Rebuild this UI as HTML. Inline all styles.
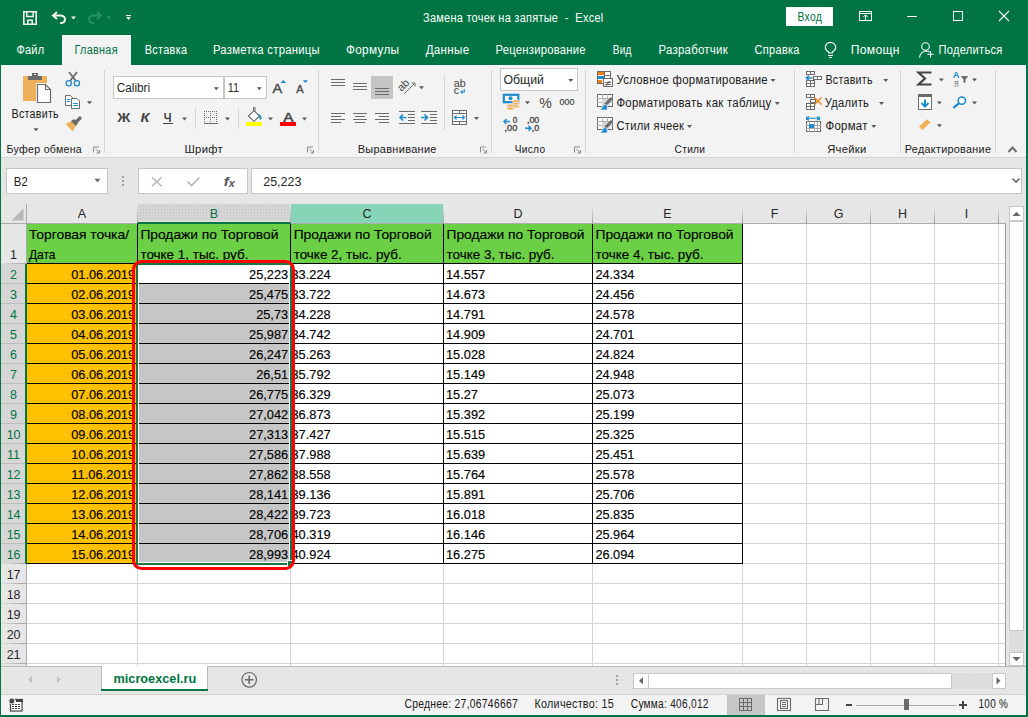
<!DOCTYPE html><html><head><meta charset="utf-8"><style>
html,body{margin:0;padding:0;width:1028px;height:717px;overflow:hidden;background:#e6e6e6}
svg{position:absolute;left:0;top:0;display:block}
text{font-family:"Liberation Sans",sans-serif;white-space:pre}
</style></head><body><svg width="1028" height="717" viewBox="0 0 1028 717" shape-rendering="crispEdges">
<rect x="0" y="0" width="1028" height="717" fill="#e6e6e6" />
<rect x="0" y="0" width="1028" height="65" fill="#007442" />
<rect x="0" y="65" width="1028" height="92" fill="#f3f3f3" />
<rect x="0" y="157" width="1028" height="1" fill="#d5d5d5" />
<rect x="62" y="35" width="69" height="30" fill="#f3f3f3" />
<text x="423.0" y="21.7" font-size="12" fill="#ffffff" letter-spacing="0.3" font-weight="normal" font-family="Liberation Sans" textLength="180.5" lengthAdjust="spacingAndGlyphs">Замена точек на запятые  -  Excel</text>
<rect x="786" y="7" width="47" height="19" fill="#ffffff" />
<text x="797.5" y="21.0" font-size="12" fill="#007442" letter-spacing="0.3" font-weight="normal" font-family="Liberation Sans" textLength="24.5" lengthAdjust="spacingAndGlyphs">Вход</text>
<text x="16.4" y="54.0" font-size="12" fill="#ffffff" letter-spacing="0.3" font-weight="normal" font-family="Liberation Sans" textLength="28.0" lengthAdjust="spacingAndGlyphs">Файл</text>
<text x="74.5" y="54.0" font-size="12" fill="#007442" letter-spacing="0.3" font-weight="normal" font-family="Liberation Sans" textLength="43.3" lengthAdjust="spacingAndGlyphs">Главная</text>
<text x="144.8" y="54.0" font-size="12" fill="#ffffff" letter-spacing="0.3" font-weight="normal" font-family="Liberation Sans" textLength="42.5" lengthAdjust="spacingAndGlyphs">Вставка</text>
<text x="212.9" y="54.0" font-size="12" fill="#ffffff" letter-spacing="0.3" font-weight="normal" font-family="Liberation Sans" textLength="107.1" lengthAdjust="spacingAndGlyphs">Разметка страницы</text>
<text x="346.0" y="54.0" font-size="12" fill="#ffffff" letter-spacing="0.3" font-weight="normal" font-family="Liberation Sans" textLength="53.4" lengthAdjust="spacingAndGlyphs">Формулы</text>
<text x="425.7" y="54.0" font-size="12" fill="#ffffff" letter-spacing="0.3" font-weight="normal" font-family="Liberation Sans" textLength="43.7" lengthAdjust="spacingAndGlyphs">Данные</text>
<text x="495.5" y="54.0" font-size="12" fill="#ffffff" letter-spacing="0.3" font-weight="normal" font-family="Liberation Sans" textLength="90.3" lengthAdjust="spacingAndGlyphs">Рецензирование</text>
<text x="612.7" y="54.0" font-size="12" fill="#ffffff" letter-spacing="0.3" font-weight="normal" font-family="Liberation Sans" textLength="19.1" lengthAdjust="spacingAndGlyphs">Вид</text>
<text x="658.4" y="54.0" font-size="12" fill="#ffffff" letter-spacing="0.3" font-weight="normal" font-family="Liberation Sans" textLength="69.6" lengthAdjust="spacingAndGlyphs">Разработчик</text>
<text x="754.6" y="54.0" font-size="12" fill="#ffffff" letter-spacing="0.3" font-weight="normal" font-family="Liberation Sans" textLength="45.2" lengthAdjust="spacingAndGlyphs">Справка</text>
<text x="850.7" y="54.0" font-size="12" fill="#ffffff" letter-spacing="0.3" font-weight="normal" font-family="Liberation Sans" textLength="49.1" lengthAdjust="spacingAndGlyphs">Помощн</text>
<text x="938.4" y="54.0" font-size="12" fill="#ffffff" letter-spacing="0.3" font-weight="normal" font-family="Liberation Sans" textLength="64.2" lengthAdjust="spacingAndGlyphs">Поделиться</text>
<text x="6.6" y="153.0" font-size="11.6" fill="#202020" letter-spacing="0.3" font-weight="normal" font-family="Liberation Sans" textLength="75.4" lengthAdjust="spacingAndGlyphs">Буфер обмена</text>
<text x="184.5" y="153.0" font-size="11.6" fill="#202020" letter-spacing="0.3" font-weight="normal" font-family="Liberation Sans" textLength="38.5" lengthAdjust="spacingAndGlyphs">Шрифт</text>
<text x="357.7" y="153.0" font-size="11.6" fill="#202020" letter-spacing="0.3" font-weight="normal" font-family="Liberation Sans" textLength="79.0" lengthAdjust="spacingAndGlyphs">Выравнивание</text>
<text x="514.8" y="153.0" font-size="11.6" fill="#202020" letter-spacing="0.3" font-weight="normal" font-family="Liberation Sans" textLength="30.5" lengthAdjust="spacingAndGlyphs">Число</text>
<text x="674.6" y="153.0" font-size="11.6" fill="#202020" letter-spacing="0.3" font-weight="normal" font-family="Liberation Sans" textLength="30.7" lengthAdjust="spacingAndGlyphs">Стили</text>
<text x="827.2" y="153.0" font-size="11.6" fill="#202020" letter-spacing="0.3" font-weight="normal" font-family="Liberation Sans" textLength="39.4" lengthAdjust="spacingAndGlyphs">Ячейки</text>
<text x="904.8" y="153.0" font-size="11.6" fill="#202020" letter-spacing="0.3" font-weight="normal" font-family="Liberation Sans" textLength="86.4" lengthAdjust="spacingAndGlyphs">Редактирование</text>
<rect x="104" y="70" width="1" height="83" fill="#d5d5d5" />
<rect x="318" y="70" width="1" height="83" fill="#d5d5d5" />
<rect x="491" y="70" width="1" height="83" fill="#d5d5d5" />
<rect x="585" y="70" width="1" height="83" fill="#d5d5d5" />
<rect x="794" y="70" width="1" height="83" fill="#d5d5d5" />
<rect x="900" y="70" width="1" height="83" fill="#d5d5d5" />
<rect x="995" y="70" width="1" height="83" fill="#d5d5d5" />
<rect x="6" y="168" width="102" height="26" fill="#c6c6c6" />
<rect x="7" y="169" width="100" height="24" fill="#ffffff" />
<text x="13.8" y="186.0" font-size="12" fill="#202020" letter-spacing="0.3" font-weight="normal" font-family="Liberation Sans" textLength="14.4" lengthAdjust="spacingAndGlyphs">B2</text>
<rect x="138" y="168" width="110" height="26" fill="#c6c6c6" />
<rect x="139" y="169" width="108" height="24" fill="#ffffff" />
<rect x="251" y="168" width="771" height="26" fill="#c6c6c6" />
<rect x="252" y="169" width="769" height="24" fill="#ffffff" />
<text x="263.2" y="186.0" font-size="12.5" fill="#262626" font-weight="normal" font-family="Liberation Sans" textLength="38.3" lengthAdjust="spacingAndGlyphs">25,223</text>
<rect x="27" y="224" width="978" height="442" fill="#ffffff" />
<rect x="0" y="204" width="1005" height="20" fill="#e6e6e6" />
<rect x="0" y="224" width="26" height="442" fill="#e6e6e6" />
<rect x="137" y="224" width="1" height="442" fill="#d4d4d4" />
<rect x="290" y="224" width="1" height="442" fill="#d4d4d4" />
<rect x="443" y="224" width="1" height="442" fill="#d4d4d4" />
<rect x="592" y="224" width="1" height="442" fill="#d4d4d4" />
<rect x="742" y="224" width="1" height="442" fill="#d4d4d4" />
<rect x="806" y="224" width="1" height="442" fill="#d4d4d4" />
<rect x="870" y="224" width="1" height="442" fill="#d4d4d4" />
<rect x="934" y="224" width="1" height="442" fill="#d4d4d4" />
<rect x="998" y="224" width="1" height="442" fill="#d4d4d4" />
<rect x="27" y="263" width="978" height="1" fill="#d4d4d4" />
<rect x="27" y="283" width="978" height="1" fill="#d4d4d4" />
<rect x="27" y="303" width="978" height="1" fill="#d4d4d4" />
<rect x="27" y="323" width="978" height="1" fill="#d4d4d4" />
<rect x="27" y="343" width="978" height="1" fill="#d4d4d4" />
<rect x="27" y="363" width="978" height="1" fill="#d4d4d4" />
<rect x="27" y="383" width="978" height="1" fill="#d4d4d4" />
<rect x="27" y="403" width="978" height="1" fill="#d4d4d4" />
<rect x="27" y="423" width="978" height="1" fill="#d4d4d4" />
<rect x="27" y="443" width="978" height="1" fill="#d4d4d4" />
<rect x="27" y="463" width="978" height="1" fill="#d4d4d4" />
<rect x="27" y="483" width="978" height="1" fill="#d4d4d4" />
<rect x="27" y="503" width="978" height="1" fill="#d4d4d4" />
<rect x="27" y="523" width="978" height="1" fill="#d4d4d4" />
<rect x="27" y="543" width="978" height="1" fill="#d4d4d4" />
<rect x="27" y="563" width="978" height="1" fill="#d4d4d4" />
<rect x="27" y="583" width="978" height="1" fill="#d4d4d4" />
<rect x="27" y="603" width="978" height="1" fill="#d4d4d4" />
<rect x="27" y="623" width="978" height="1" fill="#d4d4d4" />
<rect x="27" y="643" width="978" height="1" fill="#d4d4d4" />
<rect x="27" y="663" width="978" height="1" fill="#d4d4d4" />
<rect x="1005" y="223" width="1" height="443" fill="#9b9b9b" />
<rect x="0" y="666" width="1006" height="1" fill="#9b9b9b" />
<rect x="0" y="223" width="1005" height="1" fill="#ababab" />
<rect x="26" y="204" width="1" height="462" fill="#ababab" />
<defs><pattern id="dots" width="3" height="3" patternUnits="userSpaceOnUse" x="1" y="1"><rect width="3" height="3" fill="#d5d5d5"/><rect x="1" y="1" width="1" height="1" fill="#c2c2c2"/></pattern></defs>
<rect x="138" y="204" width="152" height="17" fill="url(#dots)" />
<rect x="138" y="221" width="152" height="1" fill="#e6e0e0" />
<rect x="137" y="222" width="154" height="2" fill="#007442" />
<rect x="291" y="204" width="152" height="19" fill="#86d5b7" />
<defs><linearGradient id="hg" x1="0" y1="0" x2="0" y2="1"><stop offset="0" stop-color="#e6e6e6"/><stop offset="1" stop-color="#a0a0a0"/></linearGradient><linearGradient id="rg" x1="0" y1="0" x2="1" y2="0"><stop offset="0" stop-color="#e6e6e6"/><stop offset="1" stop-color="#a0a0a0"/></linearGradient></defs>
<rect x="137" y="205" width="1" height="18" fill="url(#hg)" />
<rect x="290" y="205" width="1" height="18" fill="url(#hg)" />
<rect x="443" y="205" width="1" height="18" fill="url(#hg)" />
<rect x="592" y="205" width="1" height="18" fill="url(#hg)" />
<rect x="742" y="205" width="1" height="18" fill="url(#hg)" />
<rect x="806" y="205" width="1" height="18" fill="url(#hg)" />
<rect x="870" y="205" width="1" height="18" fill="url(#hg)" />
<rect x="934" y="205" width="1" height="18" fill="url(#hg)" />
<rect x="998" y="205" width="1" height="18" fill="url(#hg)" />
<path d="M11.5 220.5 L23.5 208.5 L23.5 220.5 Z" fill="#b8b8b8" shape-rendering="geometricPrecision"/>
<text x="82.0" y="218" font-size="12.5" text-anchor="middle" fill="#262626">A</text>
<text x="214.0" y="218" font-size="12.5" text-anchor="middle" fill="#007442">B</text>
<text x="367.0" y="218" font-size="12.5" text-anchor="middle" fill="#262626">C</text>
<text x="518.0" y="218" font-size="12.5" text-anchor="middle" fill="#262626">D</text>
<text x="667.5" y="218" font-size="12.5" text-anchor="middle" fill="#262626">E</text>
<text x="774.5" y="218" font-size="12.5" text-anchor="middle" fill="#262626">F</text>
<text x="838.5" y="218" font-size="12.5" text-anchor="middle" fill="#262626">G</text>
<text x="902.5" y="218" font-size="12.5" text-anchor="middle" fill="#262626">H</text>
<text x="966.5" y="218" font-size="12.5" text-anchor="middle" fill="#262626">I</text>
<rect x="0" y="264" width="25" height="300" fill="#d6d6d6" />
<rect x="25" y="264" width="2" height="300" fill="#007442" />
<rect x="0" y="263" width="26" height="1" fill="url(#rg)" />
<text x="13.6" y="258.8" font-size="12.5" text-anchor="middle" fill="#262626">1</text>
<rect x="0" y="283" width="25" height="1" fill="#bcbcbc" />
<text x="13.6" y="278.8" font-size="12.5" text-anchor="middle" fill="#007442">2</text>
<rect x="0" y="303" width="25" height="1" fill="#bcbcbc" />
<text x="13.6" y="298.8" font-size="12.5" text-anchor="middle" fill="#007442">3</text>
<rect x="0" y="323" width="25" height="1" fill="#bcbcbc" />
<text x="13.6" y="318.8" font-size="12.5" text-anchor="middle" fill="#007442">4</text>
<rect x="0" y="343" width="25" height="1" fill="#bcbcbc" />
<text x="13.6" y="338.8" font-size="12.5" text-anchor="middle" fill="#007442">5</text>
<rect x="0" y="363" width="25" height="1" fill="#bcbcbc" />
<text x="13.6" y="358.8" font-size="12.5" text-anchor="middle" fill="#007442">6</text>
<rect x="0" y="383" width="25" height="1" fill="#bcbcbc" />
<text x="13.6" y="378.8" font-size="12.5" text-anchor="middle" fill="#007442">7</text>
<rect x="0" y="403" width="25" height="1" fill="#bcbcbc" />
<text x="13.6" y="398.8" font-size="12.5" text-anchor="middle" fill="#007442">8</text>
<rect x="0" y="423" width="25" height="1" fill="#bcbcbc" />
<text x="13.6" y="418.8" font-size="12.5" text-anchor="middle" fill="#007442">9</text>
<rect x="0" y="443" width="25" height="1" fill="#bcbcbc" />
<text x="13.6" y="438.8" font-size="12.5" text-anchor="middle" fill="#007442">10</text>
<rect x="0" y="463" width="25" height="1" fill="#bcbcbc" />
<text x="13.6" y="458.8" font-size="12.5" text-anchor="middle" fill="#007442">11</text>
<rect x="0" y="483" width="25" height="1" fill="#bcbcbc" />
<text x="13.6" y="478.8" font-size="12.5" text-anchor="middle" fill="#007442">12</text>
<rect x="0" y="503" width="25" height="1" fill="#bcbcbc" />
<text x="13.6" y="498.8" font-size="12.5" text-anchor="middle" fill="#007442">13</text>
<rect x="0" y="523" width="25" height="1" fill="#bcbcbc" />
<text x="13.6" y="518.8" font-size="12.5" text-anchor="middle" fill="#007442">14</text>
<rect x="0" y="543" width="25" height="1" fill="#bcbcbc" />
<text x="13.6" y="538.8" font-size="12.5" text-anchor="middle" fill="#007442">15</text>
<rect x="0" y="563" width="25" height="1" fill="url(#rg)" />
<text x="13.6" y="558.8" font-size="12.5" text-anchor="middle" fill="#007442">16</text>
<rect x="0" y="583" width="26" height="1" fill="url(#rg)" />
<text x="13.6" y="578.8" font-size="12.5" text-anchor="middle" fill="#262626">17</text>
<rect x="0" y="603" width="26" height="1" fill="url(#rg)" />
<text x="13.6" y="598.8" font-size="12.5" text-anchor="middle" fill="#262626">18</text>
<rect x="0" y="623" width="26" height="1" fill="url(#rg)" />
<text x="13.6" y="618.8" font-size="12.5" text-anchor="middle" fill="#262626">19</text>
<rect x="0" y="643" width="26" height="1" fill="url(#rg)" />
<text x="13.6" y="638.8" font-size="12.5" text-anchor="middle" fill="#262626">20</text>
<rect x="0" y="663" width="26" height="1" fill="url(#rg)" />
<text x="13.6" y="658.8" font-size="12.5" text-anchor="middle" fill="#262626">21</text>
<rect x="27" y="224" width="978" height="0" fill="none" />
<rect x="27" y="224" width="716" height="39" fill="#6cd046" />
<rect x="27" y="264" width="110" height="299" fill="#ffc000" />
<rect x="139" y="284" width="150" height="278" fill="#c6c6c6" />
<rect x="137" y="224" width="1" height="340" fill="#000000" />
<rect x="290" y="224" width="1" height="340" fill="#000000" />
<rect x="443" y="224" width="1" height="340" fill="#000000" />
<rect x="592" y="224" width="1" height="340" fill="#000000" />
<rect x="742" y="224" width="1" height="340" fill="#000000" />
<rect x="27" y="263" width="716" height="1" fill="#000000" />
<rect x="27" y="283" width="716" height="1" fill="#000000" />
<rect x="27" y="303" width="716" height="1" fill="#000000" />
<rect x="27" y="323" width="716" height="1" fill="#000000" />
<rect x="27" y="343" width="716" height="1" fill="#000000" />
<rect x="27" y="363" width="716" height="1" fill="#000000" />
<rect x="27" y="383" width="716" height="1" fill="#000000" />
<rect x="27" y="403" width="716" height="1" fill="#000000" />
<rect x="27" y="423" width="716" height="1" fill="#000000" />
<rect x="27" y="443" width="716" height="1" fill="#000000" />
<rect x="27" y="463" width="716" height="1" fill="#000000" />
<rect x="27" y="483" width="716" height="1" fill="#000000" />
<rect x="27" y="503" width="716" height="1" fill="#000000" />
<rect x="27" y="523" width="716" height="1" fill="#000000" />
<rect x="27" y="543" width="716" height="1" fill="#000000" />
<rect x="27" y="563" width="716" height="1" fill="#000000" />
<text x="29.0" y="239.0" font-size="12.8" fill="#000000" stroke="#000000" stroke-width="0.15" font-weight="normal" font-family="Liberation Sans" textLength="100.0" lengthAdjust="spacingAndGlyphs">Торговая точка/</text>
<text x="29.0" y="259.0" font-size="12.8" fill="#000000" stroke="#000000" stroke-width="0.15" font-weight="normal" font-family="Liberation Sans" textLength="26.5" lengthAdjust="spacingAndGlyphs">Дата</text>
<text x="140.4" y="239.0" font-size="12.8" fill="#000000" stroke="#000000" stroke-width="0.15" font-weight="normal" font-family="Liberation Sans" textLength="138.0" lengthAdjust="spacingAndGlyphs">Продажи по Торговой</text>
<text x="140.4" y="259.0" font-size="12.8" fill="#000000" stroke="#000000" stroke-width="0.15" font-weight="normal" font-family="Liberation Sans" textLength="108.0" lengthAdjust="spacingAndGlyphs">точке 1, тыс. руб.</text>
<text x="293.7" y="239.0" font-size="12.8" fill="#000000" stroke="#000000" stroke-width="0.15" font-weight="normal" font-family="Liberation Sans" textLength="138.0" lengthAdjust="spacingAndGlyphs">Продажи по Торговой</text>
<text x="293.7" y="259.0" font-size="12.8" fill="#000000" stroke="#000000" stroke-width="0.15" font-weight="normal" font-family="Liberation Sans" textLength="108.0" lengthAdjust="spacingAndGlyphs">точке 2, тыс. руб.</text>
<text x="446.5" y="239.0" font-size="12.8" fill="#000000" stroke="#000000" stroke-width="0.15" font-weight="normal" font-family="Liberation Sans" textLength="138.0" lengthAdjust="spacingAndGlyphs">Продажи по Торговой</text>
<text x="446.5" y="259.0" font-size="12.8" fill="#000000" stroke="#000000" stroke-width="0.15" font-weight="normal" font-family="Liberation Sans" textLength="108.0" lengthAdjust="spacingAndGlyphs">точке 3, тыс. руб.</text>
<text x="595.5" y="239.0" font-size="12.8" fill="#000000" stroke="#000000" stroke-width="0.15" font-weight="normal" font-family="Liberation Sans" textLength="138.0" lengthAdjust="spacingAndGlyphs">Продажи по Торговой</text>
<text x="595.5" y="259.0" font-size="12.8" fill="#000000" stroke="#000000" stroke-width="0.15" font-weight="normal" font-family="Liberation Sans" textLength="108.0" lengthAdjust="spacingAndGlyphs">точке 4, тыс. руб.</text>
<clipPath id="clipA"><rect x="27" y="264" width="110" height="300"/></clipPath>
<g clip-path="url(#clipA)">
<text x="71.2" y="278.7" font-size="12.8" fill="#000000" stroke="#000000" stroke-width="0.15" font-weight="normal" font-family="Liberation Sans" textLength="63.9" lengthAdjust="spacingAndGlyphs">01.06.2019</text>
<text x="71.2" y="298.7" font-size="12.8" fill="#000000" stroke="#000000" stroke-width="0.15" font-weight="normal" font-family="Liberation Sans" textLength="63.9" lengthAdjust="spacingAndGlyphs">02.06.2019</text>
<text x="71.2" y="318.7" font-size="12.8" fill="#000000" stroke="#000000" stroke-width="0.15" font-weight="normal" font-family="Liberation Sans" textLength="63.9" lengthAdjust="spacingAndGlyphs">03.06.2019</text>
<text x="71.2" y="338.7" font-size="12.8" fill="#000000" stroke="#000000" stroke-width="0.15" font-weight="normal" font-family="Liberation Sans" textLength="63.9" lengthAdjust="spacingAndGlyphs">04.06.2019</text>
<text x="71.2" y="358.7" font-size="12.8" fill="#000000" stroke="#000000" stroke-width="0.15" font-weight="normal" font-family="Liberation Sans" textLength="63.9" lengthAdjust="spacingAndGlyphs">05.06.2019</text>
<text x="71.2" y="378.7" font-size="12.8" fill="#000000" stroke="#000000" stroke-width="0.15" font-weight="normal" font-family="Liberation Sans" textLength="63.9" lengthAdjust="spacingAndGlyphs">06.06.2019</text>
<text x="71.2" y="398.7" font-size="12.8" fill="#000000" stroke="#000000" stroke-width="0.15" font-weight="normal" font-family="Liberation Sans" textLength="63.9" lengthAdjust="spacingAndGlyphs">07.06.2019</text>
<text x="71.2" y="418.7" font-size="12.8" fill="#000000" stroke="#000000" stroke-width="0.15" font-weight="normal" font-family="Liberation Sans" textLength="63.9" lengthAdjust="spacingAndGlyphs">08.06.2019</text>
<text x="71.2" y="438.7" font-size="12.8" fill="#000000" stroke="#000000" stroke-width="0.15" font-weight="normal" font-family="Liberation Sans" textLength="63.9" lengthAdjust="spacingAndGlyphs">09.06.2019</text>
<text x="71.2" y="458.7" font-size="12.8" fill="#000000" stroke="#000000" stroke-width="0.15" font-weight="normal" font-family="Liberation Sans" textLength="63.9" lengthAdjust="spacingAndGlyphs">10.06.2019</text>
<text x="71.2" y="478.7" font-size="12.8" fill="#000000" stroke="#000000" stroke-width="0.15" font-weight="normal" font-family="Liberation Sans" textLength="63.9" lengthAdjust="spacingAndGlyphs">11.06.2019</text>
<text x="71.2" y="498.7" font-size="12.8" fill="#000000" stroke="#000000" stroke-width="0.15" font-weight="normal" font-family="Liberation Sans" textLength="63.9" lengthAdjust="spacingAndGlyphs">12.06.2019</text>
<text x="71.2" y="518.7" font-size="12.8" fill="#000000" stroke="#000000" stroke-width="0.15" font-weight="normal" font-family="Liberation Sans" textLength="63.9" lengthAdjust="spacingAndGlyphs">13.06.2019</text>
<text x="71.2" y="538.7" font-size="12.8" fill="#000000" stroke="#000000" stroke-width="0.15" font-weight="normal" font-family="Liberation Sans" textLength="63.9" lengthAdjust="spacingAndGlyphs">14.06.2019</text>
<text x="71.2" y="558.7" font-size="12.8" fill="#000000" stroke="#000000" stroke-width="0.15" font-weight="normal" font-family="Liberation Sans" textLength="63.9" lengthAdjust="spacingAndGlyphs">15.06.2019</text>
</g>
<text x="249.1" y="278.7" font-size="12.8" fill="#000000" stroke="#000000" stroke-width="0.15" font-weight="normal" font-family="Liberation Sans" textLength="39.1" lengthAdjust="spacingAndGlyphs">25,223</text>
<text x="291.5" y="278.7" font-size="12.8" fill="#000000" stroke="#000000" stroke-width="0.15" font-weight="normal" font-family="Liberation Sans" textLength="39.1" lengthAdjust="spacingAndGlyphs">33.224</text>
<text x="446.0" y="278.7" font-size="12.8" fill="#000000" stroke="#000000" stroke-width="0.15" font-weight="normal" font-family="Liberation Sans" textLength="39.1" lengthAdjust="spacingAndGlyphs">14.557</text>
<text x="595.4" y="278.7" font-size="12.8" fill="#000000" stroke="#000000" stroke-width="0.15" font-weight="normal" font-family="Liberation Sans" textLength="39.0" lengthAdjust="spacingAndGlyphs">24.334</text>
<text x="249.1" y="298.7" font-size="12.8" fill="#000000" stroke="#000000" stroke-width="0.15" font-weight="normal" font-family="Liberation Sans" textLength="39.1" lengthAdjust="spacingAndGlyphs">25,475</text>
<text x="291.5" y="298.7" font-size="12.8" fill="#000000" stroke="#000000" stroke-width="0.15" font-weight="normal" font-family="Liberation Sans" textLength="39.1" lengthAdjust="spacingAndGlyphs">33.722</text>
<text x="446.0" y="298.7" font-size="12.8" fill="#000000" stroke="#000000" stroke-width="0.15" font-weight="normal" font-family="Liberation Sans" textLength="39.1" lengthAdjust="spacingAndGlyphs">14.673</text>
<text x="595.4" y="298.7" font-size="12.8" fill="#000000" stroke="#000000" stroke-width="0.15" font-weight="normal" font-family="Liberation Sans" textLength="39.0" lengthAdjust="spacingAndGlyphs">24.456</text>
<text x="256.2" y="318.7" font-size="12.8" fill="#000000" stroke="#000000" stroke-width="0.15" font-weight="normal" font-family="Liberation Sans" textLength="31.9" lengthAdjust="spacingAndGlyphs">25,73</text>
<text x="291.5" y="318.7" font-size="12.8" fill="#000000" stroke="#000000" stroke-width="0.15" font-weight="normal" font-family="Liberation Sans" textLength="39.1" lengthAdjust="spacingAndGlyphs">34.228</text>
<text x="446.0" y="318.7" font-size="12.8" fill="#000000" stroke="#000000" stroke-width="0.15" font-weight="normal" font-family="Liberation Sans" textLength="39.1" lengthAdjust="spacingAndGlyphs">14.791</text>
<text x="595.4" y="318.7" font-size="12.8" fill="#000000" stroke="#000000" stroke-width="0.15" font-weight="normal" font-family="Liberation Sans" textLength="39.0" lengthAdjust="spacingAndGlyphs">24.578</text>
<text x="249.1" y="338.7" font-size="12.8" fill="#000000" stroke="#000000" stroke-width="0.15" font-weight="normal" font-family="Liberation Sans" textLength="39.1" lengthAdjust="spacingAndGlyphs">25,987</text>
<text x="291.5" y="338.7" font-size="12.8" fill="#000000" stroke="#000000" stroke-width="0.15" font-weight="normal" font-family="Liberation Sans" textLength="39.1" lengthAdjust="spacingAndGlyphs">34.742</text>
<text x="446.0" y="338.7" font-size="12.8" fill="#000000" stroke="#000000" stroke-width="0.15" font-weight="normal" font-family="Liberation Sans" textLength="39.1" lengthAdjust="spacingAndGlyphs">14.909</text>
<text x="595.4" y="338.7" font-size="12.8" fill="#000000" stroke="#000000" stroke-width="0.15" font-weight="normal" font-family="Liberation Sans" textLength="39.0" lengthAdjust="spacingAndGlyphs">24.701</text>
<text x="249.1" y="358.7" font-size="12.8" fill="#000000" stroke="#000000" stroke-width="0.15" font-weight="normal" font-family="Liberation Sans" textLength="39.1" lengthAdjust="spacingAndGlyphs">26,247</text>
<text x="291.5" y="358.7" font-size="12.8" fill="#000000" stroke="#000000" stroke-width="0.15" font-weight="normal" font-family="Liberation Sans" textLength="39.1" lengthAdjust="spacingAndGlyphs">35.263</text>
<text x="446.0" y="358.7" font-size="12.8" fill="#000000" stroke="#000000" stroke-width="0.15" font-weight="normal" font-family="Liberation Sans" textLength="39.1" lengthAdjust="spacingAndGlyphs">15.028</text>
<text x="595.4" y="358.7" font-size="12.8" fill="#000000" stroke="#000000" stroke-width="0.15" font-weight="normal" font-family="Liberation Sans" textLength="39.0" lengthAdjust="spacingAndGlyphs">24.824</text>
<text x="256.2" y="378.7" font-size="12.8" fill="#000000" stroke="#000000" stroke-width="0.15" font-weight="normal" font-family="Liberation Sans" textLength="31.9" lengthAdjust="spacingAndGlyphs">26,51</text>
<text x="291.5" y="378.7" font-size="12.8" fill="#000000" stroke="#000000" stroke-width="0.15" font-weight="normal" font-family="Liberation Sans" textLength="39.1" lengthAdjust="spacingAndGlyphs">35.792</text>
<text x="446.0" y="378.7" font-size="12.8" fill="#000000" stroke="#000000" stroke-width="0.15" font-weight="normal" font-family="Liberation Sans" textLength="39.1" lengthAdjust="spacingAndGlyphs">15.149</text>
<text x="595.4" y="378.7" font-size="12.8" fill="#000000" stroke="#000000" stroke-width="0.15" font-weight="normal" font-family="Liberation Sans" textLength="39.0" lengthAdjust="spacingAndGlyphs">24.948</text>
<text x="249.1" y="398.7" font-size="12.8" fill="#000000" stroke="#000000" stroke-width="0.15" font-weight="normal" font-family="Liberation Sans" textLength="39.1" lengthAdjust="spacingAndGlyphs">26,775</text>
<text x="291.5" y="398.7" font-size="12.8" fill="#000000" stroke="#000000" stroke-width="0.15" font-weight="normal" font-family="Liberation Sans" textLength="39.1" lengthAdjust="spacingAndGlyphs">36.329</text>
<text x="446.0" y="398.7" font-size="12.8" fill="#000000" stroke="#000000" stroke-width="0.15" font-weight="normal" font-family="Liberation Sans" textLength="31.9" lengthAdjust="spacingAndGlyphs">15.27</text>
<text x="595.4" y="398.7" font-size="12.8" fill="#000000" stroke="#000000" stroke-width="0.15" font-weight="normal" font-family="Liberation Sans" textLength="39.0" lengthAdjust="spacingAndGlyphs">25.073</text>
<text x="249.1" y="418.7" font-size="12.8" fill="#000000" stroke="#000000" stroke-width="0.15" font-weight="normal" font-family="Liberation Sans" textLength="39.1" lengthAdjust="spacingAndGlyphs">27,042</text>
<text x="291.5" y="418.7" font-size="12.8" fill="#000000" stroke="#000000" stroke-width="0.15" font-weight="normal" font-family="Liberation Sans" textLength="39.1" lengthAdjust="spacingAndGlyphs">36.873</text>
<text x="446.0" y="418.7" font-size="12.8" fill="#000000" stroke="#000000" stroke-width="0.15" font-weight="normal" font-family="Liberation Sans" textLength="39.1" lengthAdjust="spacingAndGlyphs">15.392</text>
<text x="595.4" y="418.7" font-size="12.8" fill="#000000" stroke="#000000" stroke-width="0.15" font-weight="normal" font-family="Liberation Sans" textLength="39.0" lengthAdjust="spacingAndGlyphs">25.199</text>
<text x="249.1" y="438.7" font-size="12.8" fill="#000000" stroke="#000000" stroke-width="0.15" font-weight="normal" font-family="Liberation Sans" textLength="39.1" lengthAdjust="spacingAndGlyphs">27,313</text>
<text x="291.5" y="438.7" font-size="12.8" fill="#000000" stroke="#000000" stroke-width="0.15" font-weight="normal" font-family="Liberation Sans" textLength="39.1" lengthAdjust="spacingAndGlyphs">37.427</text>
<text x="446.0" y="438.7" font-size="12.8" fill="#000000" stroke="#000000" stroke-width="0.15" font-weight="normal" font-family="Liberation Sans" textLength="39.1" lengthAdjust="spacingAndGlyphs">15.515</text>
<text x="595.4" y="438.7" font-size="12.8" fill="#000000" stroke="#000000" stroke-width="0.15" font-weight="normal" font-family="Liberation Sans" textLength="39.0" lengthAdjust="spacingAndGlyphs">25.325</text>
<text x="249.1" y="458.7" font-size="12.8" fill="#000000" stroke="#000000" stroke-width="0.15" font-weight="normal" font-family="Liberation Sans" textLength="39.1" lengthAdjust="spacingAndGlyphs">27,586</text>
<text x="291.5" y="458.7" font-size="12.8" fill="#000000" stroke="#000000" stroke-width="0.15" font-weight="normal" font-family="Liberation Sans" textLength="39.1" lengthAdjust="spacingAndGlyphs">37.988</text>
<text x="446.0" y="458.7" font-size="12.8" fill="#000000" stroke="#000000" stroke-width="0.15" font-weight="normal" font-family="Liberation Sans" textLength="39.1" lengthAdjust="spacingAndGlyphs">15.639</text>
<text x="595.4" y="458.7" font-size="12.8" fill="#000000" stroke="#000000" stroke-width="0.15" font-weight="normal" font-family="Liberation Sans" textLength="39.0" lengthAdjust="spacingAndGlyphs">25.451</text>
<text x="249.1" y="478.7" font-size="12.8" fill="#000000" stroke="#000000" stroke-width="0.15" font-weight="normal" font-family="Liberation Sans" textLength="39.1" lengthAdjust="spacingAndGlyphs">27,862</text>
<text x="291.5" y="478.7" font-size="12.8" fill="#000000" stroke="#000000" stroke-width="0.15" font-weight="normal" font-family="Liberation Sans" textLength="39.1" lengthAdjust="spacingAndGlyphs">38.558</text>
<text x="446.0" y="478.7" font-size="12.8" fill="#000000" stroke="#000000" stroke-width="0.15" font-weight="normal" font-family="Liberation Sans" textLength="39.1" lengthAdjust="spacingAndGlyphs">15.764</text>
<text x="595.4" y="478.7" font-size="12.8" fill="#000000" stroke="#000000" stroke-width="0.15" font-weight="normal" font-family="Liberation Sans" textLength="39.0" lengthAdjust="spacingAndGlyphs">25.578</text>
<text x="249.1" y="498.7" font-size="12.8" fill="#000000" stroke="#000000" stroke-width="0.15" font-weight="normal" font-family="Liberation Sans" textLength="39.1" lengthAdjust="spacingAndGlyphs">28,141</text>
<text x="291.5" y="498.7" font-size="12.8" fill="#000000" stroke="#000000" stroke-width="0.15" font-weight="normal" font-family="Liberation Sans" textLength="39.1" lengthAdjust="spacingAndGlyphs">39.136</text>
<text x="446.0" y="498.7" font-size="12.8" fill="#000000" stroke="#000000" stroke-width="0.15" font-weight="normal" font-family="Liberation Sans" textLength="39.1" lengthAdjust="spacingAndGlyphs">15.891</text>
<text x="595.4" y="498.7" font-size="12.8" fill="#000000" stroke="#000000" stroke-width="0.15" font-weight="normal" font-family="Liberation Sans" textLength="39.0" lengthAdjust="spacingAndGlyphs">25.706</text>
<text x="249.1" y="518.7" font-size="12.8" fill="#000000" stroke="#000000" stroke-width="0.15" font-weight="normal" font-family="Liberation Sans" textLength="39.1" lengthAdjust="spacingAndGlyphs">28,422</text>
<text x="291.5" y="518.7" font-size="12.8" fill="#000000" stroke="#000000" stroke-width="0.15" font-weight="normal" font-family="Liberation Sans" textLength="39.1" lengthAdjust="spacingAndGlyphs">39.723</text>
<text x="446.0" y="518.7" font-size="12.8" fill="#000000" stroke="#000000" stroke-width="0.15" font-weight="normal" font-family="Liberation Sans" textLength="39.1" lengthAdjust="spacingAndGlyphs">16.018</text>
<text x="595.4" y="518.7" font-size="12.8" fill="#000000" stroke="#000000" stroke-width="0.15" font-weight="normal" font-family="Liberation Sans" textLength="39.0" lengthAdjust="spacingAndGlyphs">25.835</text>
<text x="249.1" y="538.7" font-size="12.8" fill="#000000" stroke="#000000" stroke-width="0.15" font-weight="normal" font-family="Liberation Sans" textLength="39.1" lengthAdjust="spacingAndGlyphs">28,706</text>
<text x="291.5" y="538.7" font-size="12.8" fill="#000000" stroke="#000000" stroke-width="0.15" font-weight="normal" font-family="Liberation Sans" textLength="39.1" lengthAdjust="spacingAndGlyphs">40.319</text>
<text x="446.0" y="538.7" font-size="12.8" fill="#000000" stroke="#000000" stroke-width="0.15" font-weight="normal" font-family="Liberation Sans" textLength="39.1" lengthAdjust="spacingAndGlyphs">16.146</text>
<text x="595.4" y="538.7" font-size="12.8" fill="#000000" stroke="#000000" stroke-width="0.15" font-weight="normal" font-family="Liberation Sans" textLength="39.0" lengthAdjust="spacingAndGlyphs">25.964</text>
<text x="249.1" y="558.7" font-size="12.8" fill="#000000" stroke="#000000" stroke-width="0.15" font-weight="normal" font-family="Liberation Sans" textLength="39.1" lengthAdjust="spacingAndGlyphs">28,993</text>
<text x="291.5" y="558.7" font-size="12.8" fill="#000000" stroke="#000000" stroke-width="0.15" font-weight="normal" font-family="Liberation Sans" textLength="39.1" lengthAdjust="spacingAndGlyphs">40.924</text>
<text x="446.0" y="558.7" font-size="12.8" fill="#000000" stroke="#000000" stroke-width="0.15" font-weight="normal" font-family="Liberation Sans" textLength="39.1" lengthAdjust="spacingAndGlyphs">16.275</text>
<text x="595.4" y="558.7" font-size="12.8" fill="#000000" stroke="#000000" stroke-width="0.15" font-weight="normal" font-family="Liberation Sans" textLength="39.0" lengthAdjust="spacingAndGlyphs">26.094</text>
<rect x="136" y="263" width="156" height="2" fill="#1b7445" />
<rect x="136" y="263" width="2" height="302" fill="#1b7445" />
<rect x="290" y="263" width="2" height="302" fill="#1b7445" />
<rect x="136" y="563" width="156" height="2" fill="#1b7445" />
<rect x="138" y="265" width="152" height="1" fill="#ffffff" />
<rect x="138" y="265" width="1" height="298" fill="#ffffff" />
<rect x="289" y="265" width="1" height="298" fill="#ffffff" />
<rect x="138" y="562" width="152" height="1" fill="#ffffff" />
<rect x="287" y="560" width="6" height="6" fill="#ffffff" />
<rect x="288" y="561" width="5" height="5" fill="#1b7445" />
<rect x="133.5" y="261.5" width="160" height="307" rx="8" ry="8" fill="none" stroke="#ff0000" stroke-width="3" shape-rendering="geometricPrecision"/>
<rect x="23" y="76" width="24" height="25" fill="#f0b05a" />
<rect x="28" y="76" width="14" height="4" fill="#6b6b6b" />
<rect x="32" y="73" width="6" height="4" fill="#6b6b6b" />
<rect x="34" y="74" width="2" height="1" fill="#f3f3f3" />
<path d="M37.5 84.5 H45.5 L50.5 89.5 V102.5 H37.5 Z" fill="#ffffff" stroke="#f3f3f3" stroke-width="3" shape-rendering="geometricPrecision"/>
<path d="M37.5 84.5 H45.5 L50.5 89.5 V102.5 H37.5 Z M45.5 84.5 V89.5 H50.5" fill="#ffffff" stroke="#6b6b6b" stroke-width="1.2" shape-rendering="geometricPrecision"/>
<text x="11.6" y="118.0" font-size="12" fill="#202020" letter-spacing="0.3" font-weight="normal" font-family="Liberation Sans" textLength="47.3" lengthAdjust="spacingAndGlyphs">Вставить</text>
<path d="M33.5 128.3 h5 l-2.5 3.00 z" fill="#595959" shape-rendering="geometricPrecision"/>
<path d="M69 72 L76 81 M77 72 L70 81" stroke="#6b6b6b" stroke-width="1.8" fill="none" shape-rendering="geometricPrecision"/>
<circle cx="68.8" cy="83.3" r="2.6" stroke="#1e8bcd" stroke-width="1.3" fill="none" shape-rendering="geometricPrecision"/><circle cx="76.9" cy="83.3" r="2.6" stroke="#1e8bcd" stroke-width="1.3" fill="none" shape-rendering="geometricPrecision"/>
<path d="M65.5 95.5 H70.5 L72.5 97.5 V105.5 H65.5 Z" fill="#fff" stroke="#6b6b6b" stroke-width="1" shape-rendering="geometricPrecision"/>
<path d="M71.5 98.5 H77 L79.5 101 V108.5 H71.5 Z" fill="#fff" stroke="#6b6b6b" stroke-width="1" shape-rendering="geometricPrecision"/>
<rect x="67" y="99" width="3" height="1" fill="#1e8bcd" />
<rect x="67" y="101" width="3" height="1" fill="#1e8bcd" />
<rect x="73" y="103" width="5" height="1" fill="#1e8bcd" />
<rect x="73" y="105" width="5" height="1" fill="#1e8bcd" />
<path d="M87 101.3 h5 l-2.5 3.00 z" fill="#595959" shape-rendering="geometricPrecision"/>
<path d="M74 124 L80 118" stroke="#6b6b6b" stroke-width="3.2" stroke-linecap="round" shape-rendering="geometricPrecision"/>
<path d="M65.5 124 L72 121 L76 125 L73 131.5 Z" fill="#f0b05a" shape-rendering="geometricPrecision"/>
<path d="M71 121 L74 119 L78 123 L76 126 Z" fill="#6b6b6b" shape-rendering="geometricPrecision"/>
<rect x="113" y="76" width="111" height="23" fill="#c6c6c6" />
<rect x="114" y="77" width="109" height="21" fill="#ffffff" />
<rect x="224" y="76" width="43" height="23" fill="#c6c6c6" />
<rect x="225" y="77" width="41" height="21" fill="#ffffff" />
<text x="116.7" y="92.0" font-size="12.5" fill="#262626" font-weight="normal" font-family="Liberation Sans" textLength="33.5" lengthAdjust="spacingAndGlyphs">Calibri</text>
<path d="M213.8 87.2 h5 l-2.5 3.00 z" fill="#595959" shape-rendering="geometricPrecision"/>
<text x="227.8" y="92.0" font-size="12.5" fill="#262626" font-weight="normal" font-family="Liberation Sans" textLength="11.2" lengthAdjust="spacingAndGlyphs">11</text>
<path d="M256.8 87.2 h5 l-2.5 3.00 z" fill="#595959" shape-rendering="geometricPrecision"/>
<text x="272.6" y="93.0" font-size="13.5" fill="#444444" stroke="#444444" stroke-width="0.35" font-weight="normal" font-family="Liberation Sans" textLength="9.7" lengthAdjust="spacingAndGlyphs">A</text>
<path d="M280.5 83 L283.3 80 L286.1 83 Z" fill="#1e8bcd" shape-rendering="geometricPrecision"/>
<text x="296.2" y="93.0" font-size="11" fill="#444444" stroke="#444444" stroke-width="0.35" font-weight="normal" font-family="Liberation Sans" textLength="7.3" lengthAdjust="spacingAndGlyphs">A</text>
<path d="M302.8 80.2 L308 80.2 L305.4 83 Z" fill="#1e8bcd" shape-rendering="geometricPrecision"/>
<text x="117.2" y="122.0" font-size="12.5" fill="#444444" font-weight="bold" font-family="Liberation Sans" textLength="13.1" lengthAdjust="spacingAndGlyphs">Ж</text>
<text x="140.5" y="122" font-size="12.5" fill="#444444" font-weight="bold" font-style="italic" textLength="9" lengthAdjust="spacingAndGlyphs" >К</text>
<text x="163.8" y="122.0" font-size="12.5" fill="#444444" font-weight="bold" font-family="Liberation Sans" textLength="7.8" lengthAdjust="spacingAndGlyphs">Ч</text>
<rect x="163" y="123" width="10" height="1" fill="#444444" />
<path d="M182 117.5 h5 l-2.5 3.00 z" fill="#595959" shape-rendering="geometricPrecision"/>
<rect x="195" y="108" width="1" height="21" fill="#d5d5d5" />
<rect x="204" y="111" width="1" height="1" fill="#6b6b6b" />
<rect x="206" y="111" width="1" height="1" fill="#6b6b6b" />
<rect x="208" y="111" width="1" height="1" fill="#6b6b6b" />
<rect x="210" y="111" width="1" height="1" fill="#6b6b6b" />
<rect x="212" y="111" width="1" height="1" fill="#6b6b6b" />
<rect x="214" y="111" width="1" height="1" fill="#6b6b6b" />
<rect x="216" y="111" width="1" height="1" fill="#6b6b6b" />
<rect x="204" y="113" width="1" height="1" fill="#6b6b6b" />
<rect x="210" y="113" width="1" height="1" fill="#6b6b6b" />
<rect x="216" y="113" width="1" height="1" fill="#6b6b6b" />
<rect x="204" y="115" width="1" height="1" fill="#6b6b6b" />
<rect x="210" y="115" width="1" height="1" fill="#6b6b6b" />
<rect x="216" y="115" width="1" height="1" fill="#6b6b6b" />
<rect x="204" y="117" width="1" height="1" fill="#6b6b6b" />
<rect x="206" y="117" width="1" height="1" fill="#6b6b6b" />
<rect x="208" y="117" width="1" height="1" fill="#6b6b6b" />
<rect x="210" y="117" width="1" height="1" fill="#6b6b6b" />
<rect x="212" y="117" width="1" height="1" fill="#6b6b6b" />
<rect x="214" y="117" width="1" height="1" fill="#6b6b6b" />
<rect x="216" y="117" width="1" height="1" fill="#6b6b6b" />
<rect x="204" y="119" width="1" height="1" fill="#6b6b6b" />
<rect x="210" y="119" width="1" height="1" fill="#6b6b6b" />
<rect x="216" y="119" width="1" height="1" fill="#6b6b6b" />
<rect x="204" y="121" width="1" height="1" fill="#6b6b6b" />
<rect x="210" y="121" width="1" height="1" fill="#6b6b6b" />
<rect x="216" y="121" width="1" height="1" fill="#6b6b6b" />
<rect x="204" y="123" width="1" height="1" fill="#6b6b6b" />
<rect x="206" y="123" width="1" height="1" fill="#6b6b6b" />
<rect x="208" y="123" width="1" height="1" fill="#6b6b6b" />
<rect x="210" y="123" width="1" height="1" fill="#6b6b6b" />
<rect x="212" y="123" width="1" height="1" fill="#6b6b6b" />
<rect x="214" y="123" width="1" height="1" fill="#6b6b6b" />
<rect x="216" y="123" width="1" height="1" fill="#6b6b6b" />
<rect x="204" y="123" width="14" height="1" fill="#6b6b6b" />
<path d="M225 117.5 h5 l-2.5 3.00 z" fill="#595959" shape-rendering="geometricPrecision"/>
<rect x="238" y="108" width="1" height="21" fill="#d5d5d5" />
<path d="M248.5 116 L254 110.7 L259.5 116 L254 121.3 Z" fill="#fff" stroke="#6b6b6b" stroke-width="1.1" shape-rendering="geometricPrecision"/>
<path d="M253.5 111 V107.5 h1.5 v4" fill="none" stroke="#6b6b6b" stroke-width="1" shape-rendering="geometricPrecision"/>
<path d="M259 114 Q262.5 116 261 120 Q258.5 119 259 114 Z" fill="#1e8bcd" shape-rendering="geometricPrecision"/>
<rect x="246" y="122" width="16" height="4" fill="#ffff00" />
<path d="M268 117.5 h5 l-2.5 3.00 z" fill="#595959" shape-rendering="geometricPrecision"/>
<text x="283.3" y="121.5" font-size="13" fill="#444444" stroke="#444444" stroke-width="0.5" font-weight="normal" font-family="Liberation Sans" textLength="10.3" lengthAdjust="spacingAndGlyphs">A</text>
<rect x="280" y="122" width="16" height="4" fill="#ff0000" />
<path d="M302 117.5 h5 l-2.5 3.00 z" fill="#595959" shape-rendering="geometricPrecision"/>
<rect x="331" y="79" width="14" height="1" fill="#6b6b6b" />
<rect x="331" y="82" width="14" height="1" fill="#6b6b6b" />
<rect x="331" y="85" width="14" height="1" fill="#6b6b6b" />
<rect x="353" y="83" width="14" height="1" fill="#6b6b6b" />
<rect x="353" y="86" width="14" height="1" fill="#6b6b6b" />
<rect x="353" y="89" width="14" height="1" fill="#6b6b6b" />
<rect x="371" y="76" width="22" height="23" fill="#c5c5c5" />
<rect x="375" y="88" width="14" height="1" fill="#6b6b6b" />
<rect x="375" y="91" width="14" height="1" fill="#6b6b6b" />
<rect x="375" y="94" width="14" height="1" fill="#6b6b6b" />
<text x="0" y="0" font-size="11" fill="#444444" transform="translate(401.5,92) rotate(-45)">ab</text>
<path d="M404 94 L415 83 M411.5 83 H415 V86.5" fill="none" stroke="#6b6b6b" stroke-width="1" shape-rendering="geometricPrecision"/>
<path d="M419 86.2 h5 l-2.5 3.00 z" fill="#595959" shape-rendering="geometricPrecision"/>
<rect x="331" y="113" width="14" height="1" fill="#6b6b6b" />
<rect x="353.0" y="113" width="14" height="1" fill="#6b6b6b" />
<rect x="375" y="113" width="14" height="1" fill="#6b6b6b" />
<rect x="331" y="116" width="10" height="1" fill="#6b6b6b" />
<rect x="355" y="116" width="10" height="1" fill="#6b6b6b" />
<rect x="379" y="116" width="10" height="1" fill="#6b6b6b" />
<rect x="331" y="119" width="14" height="1" fill="#6b6b6b" />
<rect x="353.0" y="119" width="14" height="1" fill="#6b6b6b" />
<rect x="375" y="119" width="14" height="1" fill="#6b6b6b" />
<rect x="331" y="122" width="10" height="1" fill="#6b6b6b" />
<rect x="355" y="122" width="10" height="1" fill="#6b6b6b" />
<rect x="379" y="122" width="10" height="1" fill="#6b6b6b" />
<rect x="399" y="111" width="16" height="1" fill="#6b6b6b" />
<rect x="399" y="123" width="16" height="1" fill="#6b6b6b" />
<rect x="408" y="114" width="7" height="1" fill="#6b6b6b" />
<rect x="408" y="117" width="7" height="1" fill="#6b6b6b" />
<rect x="408" y="120" width="7" height="1" fill="#6b6b6b" />
<path d="M400 117.5 H406.5 M403 114.5 L400 117.5 L403 120.5" fill="none" stroke="#1e8bcd" stroke-width="1.6" shape-rendering="geometricPrecision"/>
<rect x="421" y="111" width="16" height="1" fill="#6b6b6b" />
<rect x="421" y="123" width="16" height="1" fill="#6b6b6b" />
<rect x="430" y="114" width="7" height="1" fill="#6b6b6b" />
<rect x="430" y="117" width="7" height="1" fill="#6b6b6b" />
<rect x="430" y="120" width="7" height="1" fill="#6b6b6b" />
<path d="M421 117.5 H427.5 M424.5 114.5 L427.5 117.5 L424.5 120.5" fill="none" stroke="#1e8bcd" stroke-width="1.6" shape-rendering="geometricPrecision"/>
<rect x="444" y="75" width="1" height="55" fill="#d5d5d5" />
<text x="453.8" y="86.6" font-size="11" fill="#444444" font-weight="normal" font-family="Liberation Sans" textLength="12.0" lengthAdjust="spacingAndGlyphs">ab</text>
<text x="453.8" y="94.2" font-size="11" fill="#444444" font-weight="normal" font-family="Liberation Sans" textLength="5.4" lengthAdjust="spacingAndGlyphs">c</text>
<path d="M464.3 89 V92 H461 M462.5 90.5 L461 92 L462.5 93.5" fill="none" stroke="#1e8bcd" stroke-width="1.1" shape-rendering="geometricPrecision"/>
<rect x="452.5" y="110.5" width="14" height="14" fill="#fff" stroke="#6b6b6b" stroke-width="1" shape-rendering="geometricPrecision"/>
<rect x="452" y="113" width="15" height="1" fill="#6b6b6b" />
<rect x="452" y="121" width="15" height="1" fill="#6b6b6b" />
<rect x="459" y="110" width="1" height="3" fill="#6b6b6b" />
<rect x="459" y="122" width="1" height="3" fill="#6b6b6b" />
<path d="M454.5 117.5 H464.5 M456.5 115.5 L454.5 117.5 L456.5 119.5 M462.5 115.5 L464.5 117.5 L462.5 119.5" fill="none" stroke="#1e8bcd" stroke-width="1.2" shape-rendering="geometricPrecision"/>
<path d="M474 117 h5 l-2.5 3.00 z" fill="#595959" shape-rendering="geometricPrecision"/>
<path d="M93.5 152.5 V147.0 H99" fill="none" stroke="#8a8a8a" stroke-width="1" shape-rendering="geometricPrecision"/>
<path d="M95.5 149.0 L99.5 153.0 M96.5 153.0 H99.5 V150.0" fill="none" stroke="#8a8a8a" stroke-width="1" shape-rendering="geometricPrecision"/>
<path d="M307.5 152.5 V147.0 H313" fill="none" stroke="#8a8a8a" stroke-width="1" shape-rendering="geometricPrecision"/>
<path d="M309.5 149.0 L313.5 153.0 M310.5 153.0 H313.5 V150.0" fill="none" stroke="#8a8a8a" stroke-width="1" shape-rendering="geometricPrecision"/>
<path d="M480.5 152.5 V147.0 H486" fill="none" stroke="#8a8a8a" stroke-width="1" shape-rendering="geometricPrecision"/>
<path d="M482.5 149.0 L486.5 153.0 M483.5 153.0 H486.5 V150.0" fill="none" stroke="#8a8a8a" stroke-width="1" shape-rendering="geometricPrecision"/>
<path d="M574.5 152.5 V147.0 H580" fill="none" stroke="#8a8a8a" stroke-width="1" shape-rendering="geometricPrecision"/>
<path d="M576.5 149.0 L580.5 153.0 M577.5 153.0 H580.5 V150.0" fill="none" stroke="#8a8a8a" stroke-width="1" shape-rendering="geometricPrecision"/>
<rect x="500" y="68" width="78" height="23" fill="#c6c6c6" />
<rect x="501" y="69" width="76" height="21" fill="#ffffff" />
<text x="503.5" y="84.0" font-size="12.5" fill="#262626" font-weight="normal" font-family="Liberation Sans" textLength="40.5" lengthAdjust="spacingAndGlyphs">Общий</text>
<path d="M568.3 79 h5 l-2.5 3.00 z" fill="#595959" shape-rendering="geometricPrecision"/>
<rect x="503.8" y="94.8" width="14.5" height="7.4" fill="#fff" stroke="#1e8bcd" stroke-width="2.2" shape-rendering="geometricPrecision"/>
<circle cx="510.5" cy="98.2" r="2" fill="#1e8bcd" shape-rendering="geometricPrecision"/>
<ellipse cx="515.8" cy="101.2" rx="3.6" ry="1.5" fill="#f0b05a" stroke="#f3f3f3" stroke-width="0.7" shape-rendering="geometricPrecision"/>
<ellipse cx="515.8" cy="103.8" rx="3.6" ry="1.5" fill="#f0b05a" stroke="#f3f3f3" stroke-width="0.7" shape-rendering="geometricPrecision"/>
<ellipse cx="515.8" cy="106.4" rx="3.6" ry="1.5" fill="#f0b05a" stroke="#f3f3f3" stroke-width="0.7" shape-rendering="geometricPrecision"/>
<ellipse cx="510.3" cy="105.6" rx="3.7" ry="1.6" fill="#f0b05a" stroke="#f3f3f3" stroke-width="0.7" shape-rendering="geometricPrecision"/>
<ellipse cx="510.3" cy="108.4" rx="3.7" ry="1.6" fill="#f0b05a" stroke="#f3f3f3" stroke-width="0.7" shape-rendering="geometricPrecision"/>
<path d="M525 101.3 h5 l-2.5 3.00 z" fill="#595959" shape-rendering="geometricPrecision"/>
<text x="539.3" y="108.0" font-size="14.5" fill="#444444" font-weight="normal" font-family="Liberation Sans" textLength="12.5" lengthAdjust="spacingAndGlyphs">%</text>
<text x="559.6" y="105.0" font-size="9.5" fill="#444444" stroke="#444444" stroke-width="0.2" font-weight="normal" font-family="Liberation Sans" textLength="14.8" lengthAdjust="spacingAndGlyphs">000</text>
<path d="M510 121.5 H504 M506.5 119 L504 121.5 L506.5 124" fill="none" stroke="#1e8bcd" stroke-width="1.5" shape-rendering="geometricPrecision"/>
<text x="512.8" y="123.4" font-size="8.5" fill="#444444" stroke="#444444" stroke-width="0.3" font-weight="normal" font-family="Liberation Sans" textLength="4.6" lengthAdjust="spacingAndGlyphs">0</text>
<text x="504.5" y="131.0" font-size="8.5" fill="#444444" stroke="#444444" stroke-width="0.3" font-weight="normal" font-family="Liberation Sans" textLength="12.9" lengthAdjust="spacingAndGlyphs">,00</text>
<text x="527.0" y="123.4" font-size="8.5" fill="#444444" stroke="#444444" stroke-width="0.3" font-weight="normal" font-family="Liberation Sans" textLength="12.3" lengthAdjust="spacingAndGlyphs">,00</text>
<path d="M525 128.3 H531 M528.5 125.8 L531 128.3 L528.5 130.8" fill="none" stroke="#1e8bcd" stroke-width="1.5" shape-rendering="geometricPrecision"/>
<text x="531.8" y="131.0" font-size="8.5" fill="#444444" stroke="#444444" stroke-width="0.3" font-weight="normal" font-family="Liberation Sans" textLength="7.5" lengthAdjust="spacingAndGlyphs">,0</text>
<rect x="597.5" y="71.5" width="13" height="12" fill="#fff" stroke="#6b6b6b" stroke-width="1" shape-rendering="geometricPrecision"/>
<rect x="598" y="72" width="6" height="3" fill="#f07f12" />
<rect x="598" y="76" width="6" height="3" fill="#1e8bcd" />
<rect x="598" y="80" width="4" height="3" fill="#f07f12" />
<rect x="604" y="75" width="7" height="1" fill="#6b6b6b" />
<rect x="604" y="72" width="1" height="11" fill="#6b6b6b" />
<rect x="603.5" y="78.5" width="9" height="8" fill="#fff" stroke="#6b6b6b" stroke-width="1" shape-rendering="geometricPrecision"/>
<text x="604.8" y="85.5" font-size="8" fill="#444444" font-weight="normal" font-family="Liberation Sans" textLength="6.7" lengthAdjust="spacingAndGlyphs">≠</text>
<text x="616.4" y="84.0" font-size="12" fill="#202020" letter-spacing="0.3" font-weight="normal" font-family="Liberation Sans" textLength="151.6" lengthAdjust="spacingAndGlyphs">Условное форматирование</text>
<path d="M770.5 79 h5 l-2.5 3.00 z" fill="#595959" shape-rendering="geometricPrecision"/>
<rect x="597.5" y="94.5" width="15" height="12" fill="#fff" stroke="#6b6b6b" stroke-width="1" shape-rendering="geometricPrecision"/>
<rect x="597" y="98" width="16" height="1" fill="#b0b0b0" />
<rect x="597" y="102" width="16" height="1" fill="#b0b0b0" />
<rect x="602" y="94" width="1" height="13" fill="#b0b0b0" />
<rect x="607" y="94" width="1" height="13" fill="#b0b0b0" />
<rect x="602" y="99" width="8" height="7" fill="#d8d8d8" />
<path d="M605 105 L612 98" stroke="#6b6b6b" stroke-width="3" shape-rendering="geometricPrecision"/>
<path d="M600.5 110 L604 104.5 Q607 104 607.5 107 L607 110 Z" fill="#1e8bcd" stroke="#f3f3f3" stroke-width="0.6" shape-rendering="geometricPrecision"/>
<rect x="597.5" y="117.5" width="15" height="12" fill="#fff" stroke="#6b6b6b" stroke-width="1" shape-rendering="geometricPrecision"/>
<rect x="597" y="121" width="16" height="1" fill="#b0b0b0" />
<rect x="597" y="125" width="16" height="1" fill="#b0b0b0" />
<rect x="602" y="117" width="1" height="13" fill="#b0b0b0" />
<rect x="607" y="117" width="1" height="13" fill="#b0b0b0" />
<rect x="602" y="122" width="8" height="7" fill="#d8d8d8" />
<path d="M605 128 L612 121" stroke="#6b6b6b" stroke-width="3" shape-rendering="geometricPrecision"/>
<path d="M600.5 133 L604 127.5 Q607 127 607.5 130 L607 133 Z" fill="#1e8bcd" stroke="#f3f3f3" stroke-width="0.6" shape-rendering="geometricPrecision"/>
<text x="616.4" y="107.0" font-size="12" fill="#202020" letter-spacing="0.3" font-weight="normal" font-family="Liberation Sans" textLength="155.2" lengthAdjust="spacingAndGlyphs">Форматировать как таблицу</text>
<path d="M774.8 102 h5 l-2.5 3.00 z" fill="#595959" shape-rendering="geometricPrecision"/>
<text x="616.4" y="130.0" font-size="12" fill="#202020" letter-spacing="0.3" font-weight="normal" font-family="Liberation Sans" textLength="67.9" lengthAdjust="spacingAndGlyphs">Стили ячеек</text>
<path d="M687 125 h5 l-2.5 3.00 z" fill="#595959" shape-rendering="geometricPrecision"/>
<rect x="806.5" y="71.5" width="8" height="3" fill="#fff" stroke="#6b6b6b" stroke-width="1" shape-rendering="geometricPrecision"/>
<rect x="806.5" y="80.5" width="8" height="6" fill="#fff" stroke="#6b6b6b" stroke-width="1" shape-rendering="geometricPrecision"/>
<rect x="806" y="83" width="9" height="1" fill="#6b6b6b" />
<rect x="810" y="80" width="1" height="7" fill="#6b6b6b" />
<rect x="810" y="71" width="1" height="4" fill="#6b6b6b" />
<rect x="813.5" y="76.5" width="8" height="3" fill="#fff" stroke="#6b6b6b" stroke-width="1" shape-rendering="geometricPrecision"/>
<rect x="817" y="76" width="1" height="4" fill="#6b6b6b" />
<path d="M812.5 78 H806.5 M809 75.5 L806.5 78 L809 80.5" fill="none" stroke="#1e8bcd" stroke-width="1.6" shape-rendering="geometricPrecision"/>
<text x="825.5" y="84.0" font-size="12" fill="#202020" letter-spacing="0.3" font-weight="normal" font-family="Liberation Sans" textLength="47.3" lengthAdjust="spacingAndGlyphs">Вставить</text>
<path d="M883.2 79 h5 l-2.5 3.00 z" fill="#595959" shape-rendering="geometricPrecision"/>
<rect x="806.5" y="94.5" width="8" height="3" fill="#fff" stroke="#6b6b6b" stroke-width="1" shape-rendering="geometricPrecision"/>
<rect x="806.5" y="103.5" width="8" height="6" fill="#fff" stroke="#6b6b6b" stroke-width="1" shape-rendering="geometricPrecision"/>
<rect x="806" y="106" width="9" height="1" fill="#6b6b6b" />
<rect x="810" y="103" width="1" height="7" fill="#6b6b6b" />
<rect x="810" y="94" width="1" height="4" fill="#6b6b6b" />
<rect x="810.5" y="99.5" width="5" height="3" fill="#fff" stroke="#6b6b6b" stroke-width="1" shape-rendering="geometricPrecision"/>
<path d="M814.5 97.5 L821.5 104.5 M821.5 97.5 L814.5 104.5" stroke="#f07f12" stroke-width="1.4" shape-rendering="geometricPrecision"/>
<text x="824.8" y="107.0" font-size="12" fill="#202020" letter-spacing="0.3" font-weight="normal" font-family="Liberation Sans" textLength="44.3" lengthAdjust="spacingAndGlyphs">Удалить</text>
<path d="M879 102 h5 l-2.5 3.00 z" fill="#595959" shape-rendering="geometricPrecision"/>
<path d="M806.5 116.5 V120 M819.5 116.5 V120 M807 118.3 H819 M809 116.3 L807 118.3 L809 120.3 M817 116.3 L819 118.3 L817 120.3" fill="none" stroke="#1e8bcd" stroke-width="1.1" shape-rendering="geometricPrecision"/>
<rect x="806.5" y="121.5" width="14" height="10" fill="#fff" stroke="#6b6b6b" stroke-width="1" shape-rendering="geometricPrecision"/>
<rect x="806" y="125" width="15" height="1" fill="#a8a8a8" />
<rect x="806" y="128" width="15" height="1" fill="#a8a8a8" />
<rect x="809" y="121" width="1" height="11" fill="#a8a8a8" />
<rect x="814" y="121" width="1" height="11" fill="#a8a8a8" />
<rect x="817" y="121" width="1" height="11" fill="#a8a8a8" />
<rect x="809" y="124" width="5" height="4" fill="#1e8bcd" />
<text x="825.5" y="130.0" font-size="12" fill="#202020" letter-spacing="0.3" font-weight="normal" font-family="Liberation Sans" textLength="42.2" lengthAdjust="spacingAndGlyphs">Формат</text>
<path d="M871.3 125 h5 l-2.5 3.00 z" fill="#595959" shape-rendering="geometricPrecision"/>
<path d="M931.5 72.5 H918.5 L925 78.5 L918.5 84.5 H931.5" fill="none" stroke="#444444" stroke-width="2.2" stroke-linejoin="miter" shape-rendering="geometricPrecision"/>
<path d="M938.9 78.4 h5 l-2.5 3.00 z" fill="#595959" shape-rendering="geometricPrecision"/>
<text x="952.8" y="77.8" font-size="8.5" fill="#1e8bcd" font-weight="bold" font-family="Liberation Sans" textLength="6.7" lengthAdjust="spacingAndGlyphs">A</text>
<text x="954.0" y="86.5" font-size="8.5" fill="#6b6b6b" font-weight="normal" font-family="Liberation Sans" textLength="4.6" lengthAdjust="spacingAndGlyphs">Я</text>
<path d="M960.8 76 H968.2 L965.5 79.5 V82.8 H963.5 V79.5 Z" fill="#6b6b6b" shape-rendering="geometricPrecision"/>
<path d="M972 78.4 h5 l-2.5 3.00 z" fill="#595959" shape-rendering="geometricPrecision"/>
<rect x="918.5" y="94.5" width="13" height="15" fill="#fff" stroke="#6b6b6b" stroke-width="1" shape-rendering="geometricPrecision"/>
<rect x="918" y="94" width="14" height="3" fill="#6b6b6b" />
<path d="M925 99.5 V106.5 M921.5 103 L925 106.5 L928.5 103" fill="none" stroke="#1e8bcd" stroke-width="2" shape-rendering="geometricPrecision"/>
<path d="M936.9 101.4 h5 l-2.5 3.00 z" fill="#595959" shape-rendering="geometricPrecision"/>
<circle cx="961.8" cy="100.6" r="3.7" fill="#fff" stroke="#1e8bcd" stroke-width="1.5" shape-rendering="geometricPrecision"/>
<path d="M954 107.3 L958.8 103.3" stroke="#1e8bcd" stroke-width="2.2" stroke-linecap="round" shape-rendering="geometricPrecision"/>
<path d="M972 101.4 h5 l-2.5 3.00 z" fill="#595959" shape-rendering="geometricPrecision"/>
<path d="M919 126.5 L927 119.3 L930.5 122.5 L922.5 130 Z" fill="#f0b05a" shape-rendering="geometricPrecision"/>
<path d="M937 124.3 h5 l-2.5 3.00 z" fill="#595959" shape-rendering="geometricPrecision"/>
<path d="M1008.5 152 L1012.5 147.5 L1016.5 152" fill="none" stroke="#6b6b6b" stroke-width="1.9" shape-rendering="geometricPrecision"/>
<path d="M23.8 11.8 H36.2 V24.2 H23.8 Z" fill="none" stroke="#f2f2f2" stroke-width="1.6" shape-rendering="geometricPrecision"/>
<path d="M26.8 11.8 V16.6 H33.2 V11.8" fill="none" stroke="#f2f2f2" stroke-width="1.5" shape-rendering="geometricPrecision"/>
<path d="M27.8 24.2 V20.3 H32.2 V24.2" fill="none" stroke="#f2f2f2" stroke-width="1.5" shape-rendering="geometricPrecision"/>
<path d="M53.5 15.5 H59.5 Q65 15.5 65 19.3 Q65 23.2 60 23.2" fill="none" stroke="#f2f2f2" stroke-width="2" shape-rendering="geometricPrecision"/>
<path d="M57 12 L53 15.5 L57 19" fill="none" stroke="#f2f2f2" stroke-width="2" shape-rendering="geometricPrecision"/>
<path d="M71 16.6 h5 l-2.5 3.00 z" fill="#f2f2f2" shape-rendering="geometricPrecision"/>
<path d="M100.5 15.5 H94.5 Q89 15.5 89 19.3 Q89 23.2 94 23.2" fill="none" stroke="#23946a" stroke-width="2" shape-rendering="geometricPrecision"/>
<path d="M97 12 L101 15.5 L97 19" fill="none" stroke="#23946a" stroke-width="2" shape-rendering="geometricPrecision"/>
<path d="M106.1 16.6 h5 l-2.5 3.00 z" fill="#23946a" shape-rendering="geometricPrecision"/>
<rect x="126" y="15" width="5" height="1" fill="#f2f2f2" />
<path d="M126 17 h5 l-2.5 3.00 z" fill="#f2f2f2" shape-rendering="geometricPrecision"/>
<rect x="859.5" y="11.5" width="12" height="9" fill="none" stroke="#fff" stroke-width="1" shape-rendering="geometricPrecision"/>
<rect x="859" y="13" width="13" height="1" fill="#ffffff" />
<path d="M865.5 20 V15 M863.3 17 L865.5 14.8 L867.7 17" fill="none" stroke="#fff" stroke-width="1" shape-rendering="geometricPrecision"/>
<rect x="907" y="16" width="10" height="1" fill="#ffffff" />
<rect x="953.5" y="11.5" width="9" height="9" fill="none" stroke="#fff" stroke-width="1" shape-rendering="geometricPrecision"/>
<path d="M999 11 L1009 21 M1009 11 L999 21" stroke="#fff" stroke-width="1.1" shape-rendering="geometricPrecision"/>
<path d="M828.6 53 V51.8 Q825.3 50 825.3 47.5 A5.2 5.2 0 0 1 835.7 47.5 Q835.7 50 832.4 51.8 V53 Z" fill="none" stroke="#fff" stroke-width="1.2" shape-rendering="geometricPrecision"/>
<rect x="828" y="55" width="5" height="1" fill="#ffffff" />
<rect x="829" y="57" width="3" height="1" fill="#ffffff" />
<circle cx="925.5" cy="46.5" r="3.8" fill="none" stroke="#fff" stroke-width="1.1" shape-rendering="geometricPrecision"/>
<path d="M919.5 57.5 Q920.5 51.5 926 51 Q928 51 929.5 52" fill="none" stroke="#fff" stroke-width="1.1" shape-rendering="geometricPrecision"/>
<path d="M930.5 51 V57.5 M927.3 54.3 H933.7" fill="none" stroke="#fff" stroke-width="1.1" shape-rendering="geometricPrecision"/>
<rect x="0" y="666" width="1028" height="28" fill="#e6e6e6" />
<rect x="0" y="666" width="1028" height="1" fill="#b9b9b9" />
<path d="M32 676 V683.2 L28 679.6 Z" fill="#c0c0c0" shape-rendering="geometricPrecision"/>
<path d="M57 676 V683.2 L61 679.6 Z" fill="#c0c0c0" shape-rendering="geometricPrecision"/>
<rect x="101" y="666" width="107" height="25" fill="#b9b9b9" />
<rect x="102" y="666" width="105" height="23" fill="#ffffff" />
<rect x="101" y="689" width="107" height="2" fill="#007442" />
<text x="113.5" y="683.4" font-size="12.8" fill="#007442" font-weight="bold" font-family="Liberation Sans" textLength="82.7" lengthAdjust="spacingAndGlyphs">microexcel.ru</text>
<circle cx="249.2" cy="679.8" r="7.3" fill="none" stroke="#6b6b6b" stroke-width="1.2" shape-rendering="geometricPrecision"/>
<path d="M249.2 675.5 V684.1 M244.9 679.8 H253.5" stroke="#6b6b6b" stroke-width="1.6" shape-rendering="geometricPrecision"/>
<rect x="616" y="675" width="2" height="2" fill="#a0a0a0" />
<rect x="616" y="679" width="2" height="2" fill="#a0a0a0" />
<rect x="616" y="683" width="2" height="2" fill="#a0a0a0" />
<rect x="633" y="673" width="373" height="16" fill="#c8c8c8" />
<rect x="634" y="674" width="14" height="14" fill="#ffffff" />
<path d="M643 677 V684.5 L639 680.75 Z" fill="#6b6b6b" shape-rendering="geometricPrecision"/>
<rect x="648" y="673" width="304" height="16" fill="#c8c8c8" />
<rect x="649" y="674" width="302" height="14" fill="#ffffff" />
<defs><pattern id="tex" width="3" height="3" patternUnits="userSpaceOnUse"><rect width="3" height="3" fill="#e2e2e2"/><rect width="1" height="1" fill="#cfcfcf"/><rect x="2" y="1" width="1" height="1" fill="#d6d6d6"/><rect x="1" y="2" width="1" height="1" fill="#d2d2d2"/></pattern></defs>
<rect x="952" y="673" width="40" height="16" fill="url(#tex)" />
<rect x="992" y="673" width="14" height="16" fill="#c8c8c8" />
<rect x="993" y="674" width="12" height="14" fill="#ffffff" />
<path d="M996.5 677 V684.5 L1000.5 680.75 Z" fill="#6b6b6b" shape-rendering="geometricPrecision"/>
<rect x="1006" y="204" width="20" height="462" fill="#e6e6e6" />
<rect x="1009" y="206" width="15" height="15" fill="#c8c8c8" />
<rect x="1010" y="207" width="13" height="13" fill="#ffffff" />
<path d="M1012.3 216 H1020.7 L1016.5 211.8 Z" fill="#6b6b6b" shape-rendering="geometricPrecision"/>
<rect x="1009" y="221" width="15" height="410" fill="#c8c8c8" />
<rect x="1010" y="222" width="13" height="408" fill="#ffffff" />
<rect x="1009" y="631" width="15" height="21" fill="url(#tex)" />
<rect x="1009" y="652" width="15" height="14" fill="#c8c8c8" />
<rect x="1010" y="653" width="13" height="12" fill="#ffffff" />
<path d="M1012.3 657 H1020.7 L1016.5 661.2 Z" fill="#6b6b6b" shape-rendering="geometricPrecision"/>
<rect x="0" y="694" width="1028" height="23" fill="#f3f3f3" />
<rect x="0" y="694" width="1028" height="1" fill="#d2d2d2" />
<rect x="10.5" y="699.5" width="11.5" height="11.5" fill="#fff" stroke="#444444" stroke-width="1.2" shape-rendering="geometricPrecision"/>
<rect x="16" y="699" width="7" height="3" fill="#444444" />
<circle cx="11.8" cy="701" r="2.9" fill="#444444" stroke="#f3f3f3" stroke-width="0.8" shape-rendering="geometricPrecision"/>
<rect x="12" y="704" width="2" height="1" fill="#444444" />
<rect x="15" y="704" width="2" height="1" fill="#444444" />
<rect x="18" y="704" width="2" height="1" fill="#444444" />
<rect x="12" y="706" width="2" height="1" fill="#444444" />
<rect x="15" y="706" width="2" height="1" fill="#444444" />
<rect x="18" y="706" width="2" height="1" fill="#444444" />
<rect x="12" y="708" width="2" height="1" fill="#444444" />
<rect x="15" y="708" width="2" height="1" fill="#444444" />
<rect x="18" y="708" width="2" height="1" fill="#444444" />
<text x="404.4" y="708.2" font-size="12" fill="#202020" letter-spacing="0.3" font-weight="normal" font-family="Liberation Sans" textLength="113.6" lengthAdjust="spacingAndGlyphs">Среднее: 27,06746667</text>
<text x="534.5" y="708.2" font-size="12" fill="#202020" letter-spacing="0.3" font-weight="normal" font-family="Liberation Sans" textLength="79.5" lengthAdjust="spacingAndGlyphs">Количество: 15</text>
<text x="630.8" y="708.2" font-size="12" fill="#202020" letter-spacing="0.3" font-weight="normal" font-family="Liberation Sans" textLength="77.9" lengthAdjust="spacingAndGlyphs">Сумма: 406,012</text>
<rect x="727" y="695" width="38" height="20" fill="#c6c6c6" />
<rect x="739.5" y="698.5" width="12" height="12" fill="none" stroke="#6b6b6b" stroke-width="1" shape-rendering="geometricPrecision"/>
<rect x="743" y="698" width="1" height="13" fill="#6b6b6b" />
<rect x="747" y="698" width="1" height="13" fill="#6b6b6b" />
<rect x="739" y="702" width="13" height="1" fill="#6b6b6b" />
<rect x="739" y="706" width="13" height="1" fill="#6b6b6b" />
<rect x="777.5" y="698.5" width="13" height="12" fill="none" stroke="#6b6b6b" stroke-width="1.1" shape-rendering="geometricPrecision"/>
<rect x="780.5" y="700.5" width="7" height="8" fill="none" stroke="#6b6b6b" stroke-width="1" shape-rendering="geometricPrecision"/>
<rect x="782" y="702" width="4" height="1" fill="#6b6b6b" />
<rect x="782" y="704" width="4" height="1" fill="#6b6b6b" />
<rect x="782" y="706" width="4" height="1" fill="#6b6b6b" />
<path d="M815.5 698.5 H828.5 V710.5 H815.5 Z M815.5 704.5 H822.5 V698.5 M819 698.5 V704.5" fill="none" stroke="#6b6b6b" stroke-width="1.1" shape-rendering="geometricPrecision"/>
<rect x="846" y="704" width="6" height="2" fill="#444444" />
<rect x="856" y="705" width="100" height="1" fill="#a8a8a8" />
<rect x="904" y="699" width="5" height="11" fill="#6b6b6b" />
<rect x="959" y="704" width="8" height="2" fill="#444444" />
<rect x="962" y="701" width="2" height="8" fill="#444444" />
<text x="978.6" y="708.0" font-size="12" fill="#202020" letter-spacing="0.3" font-weight="normal" font-family="Liberation Sans" textLength="29.4" lengthAdjust="spacingAndGlyphs">100 %</text>
<rect x="0" y="65" width="1" height="652" fill="#007442" />
<rect x="1026" y="65" width="2" height="652" fill="#007442" />
<rect x="0" y="715" width="1028" height="2" fill="#007442" />
<path d="M94.5 178.8 h6 l-3.0 3.60 z" fill="#6b6b6b" shape-rendering="geometricPrecision"/>
<rect x="122" y="176" width="2" height="2" fill="#a0a0a0" />
<rect x="122" y="180" width="2" height="2" fill="#a0a0a0" />
<rect x="122" y="184" width="2" height="2" fill="#a0a0a0" />
<path d="M151.8 177.2 L161.8 186.2 M161.8 177.2 L151.8 186.2" stroke="#b4b4b4" stroke-width="1.4" shape-rendering="geometricPrecision"/>
<path d="M187.5 181.5 L191.5 185.5 L199.5 177.5" fill="none" stroke="#b4b4b4" stroke-width="1.6" shape-rendering="geometricPrecision"/>
<text x="223.8" y="185.5" font-size="13" font-family="Liberation Serif" font-style="italic" font-weight="bold" fill="#555555" textLength="5" lengthAdjust="spacingAndGlyphs">f</text>
<text x="228.8" y="186.8" font-size="10" font-family="Liberation Serif" font-style="italic" font-weight="bold" fill="#555555" textLength="6" lengthAdjust="spacingAndGlyphs">x</text>
<path d="M1012.5 178.5 L1016 182 L1019.5 178.5" fill="none" stroke="#6b6b6b" stroke-width="1.6" shape-rendering="geometricPrecision"/>
</svg></body></html>
